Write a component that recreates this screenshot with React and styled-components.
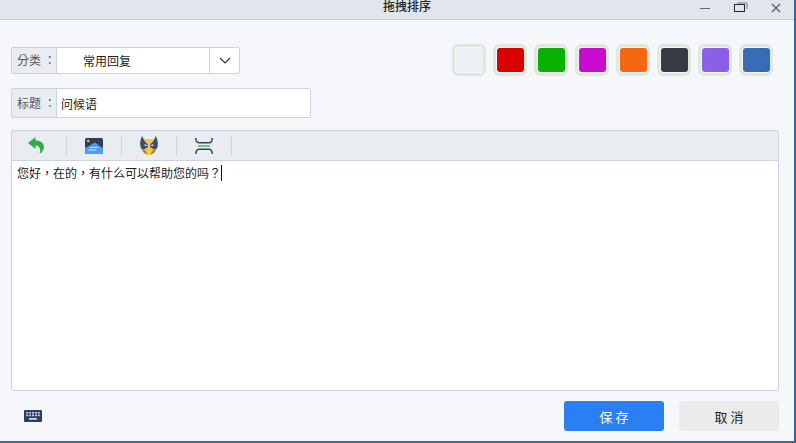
import styled, { createGlobalStyle } from "styled-components";

const Global = createGlobalStyle`
  html, body {
    margin: 0;
    padding: 0;
    background: #f5f7fb;
    overflow: hidden;
  }
  * { box-sizing: border-box; }
`;

const Window = styled.div`
  width: 796px;
  height: 443px;
  display: flex;
  flex-direction: column;
  background: #f5f7fb;
  font-family: "Noto Sans CJK SC", "Liberation Sans", sans-serif;
  font-size: 12px;
  color: #222;
  border-right: 2px solid #2f68a5;
  border-bottom: 2px solid #3f6a85;
  overflow: hidden;
`;

const TitleBar = styled.div`
  height: 20px;
  flex: none;
  background: #e1e6ee;
  border-bottom: 1px solid #c5c9d0;
  position: relative;
`;

const TitleText = styled.div`
  text-align: center;
  font-size: 12px;
  font-weight: 500;
  line-height: 12px;
  padding-left: 20px;
`;

const WinButtons = styled.div`
  position: absolute;
  top: 1px;
  right: 13px;
  display: flex;
  gap: 23px;
  height: 13px;
  align-items: center;
`;

const Body = styled.div`
  flex: 1;
  display: flex;
  flex-direction: column;
  padding: 24px 15px 0 11px;
`;

const TopRow = styled.div`
  display: flex;
  justify-content: space-between;
  align-items: center;
  height: 32px;
  padding-right: 6px;
`;

const Field = styled.div`
  display: flex;
  height: ${(p) => p.$h}px;
  width: ${(p) => p.$w}px;
  border: 1px solid #ccd2de;
  border-radius: 2px;
  background: #fff;
`;

const FieldLabel = styled.div`
  width: 45px;
  flex: none;
  background: #e9edf2;
  border-right: 1px solid #ccd2de;
  color: #555;
  line-height: 1;
  display: flex;
  align-items: center;
  padding-left: 5px;
  white-space: pre;
  font-family: "Noto Sans CJK TC", "Noto Sans CJK SC", sans-serif;
`;

const SelectValue = styled.div`
  flex: 1;
  display: flex;
  align-items: center;
  padding-left: 26px;
`;

const Caret = styled.div`
  width: 30px;
  flex: none;
  border-left: 1px solid #ccd2de;
  display: flex;
  align-items: center;
  justify-content: center;
`;

const TitleValue = styled.div`
  flex: 1;
  display: flex;
  align-items: center;
  padding-left: 4px;
`;

const Swatches = styled.div`
  display: flex;
  gap: 7px;
`;

const Swatch = styled.div`
  width: 34px;
  height: 32px;
  border: 3px solid #dfeadf;
  border-radius: 6px;
  background: #f5f7fb;
  padding: 1px 0.5px;
  display: flex;

  &::after {
    content: "";
    flex: 1;
    border-radius: 3px;
    background: ${(p) => p.$color};
  }
`;

const TitleRow = styled.div`
  margin-top: 12px;
`;

const Editor = styled.div`
  margin-top: 12px;
  height: 261px;
  flex: none;
  border: 1px solid #ccd2de;
  border-radius: 2px;
  display: flex;
  flex-direction: column;
  background: #fff;
`;

const Toolbar = styled.div`
  height: 30px;
  flex: none;
  background: #e9edf2;
  border-bottom: 1px solid #ccd2de;
  display: flex;
  align-items: center;
`;

const Tool = styled.div`
  width: 55px;
  height: 20px;
  display: flex;
  align-items: center;
  justify-content: center;
  border-right: 1px solid #d3d7dd;
  padding-right: ${(p) => p.$shift || 0}px;
`;

const EditArea = styled.div`
  flex: 1;
  padding: 3px 5px;
  font-size: 12px;
  line-height: 18px;
  color: #222;
  font-family: "Noto Sans CJK TC", "Noto Sans CJK SC", sans-serif;
`;

const Cursor = styled.span`
  display: inline-block;
  width: 1px;
  height: 16px;
  background: #111;
  vertical-align: -3px;
`;

const Footer = styled.div`
  flex: 1;
  display: flex;
  align-items: flex-start;
  justify-content: space-between;
  padding: 10px 0 0 13px;
`;

const KeyboardWrap = styled.div`
  margin-top: 9px;
  display: flex;
`;

const Buttons = styled.div`
  display: flex;
  gap: 15px;
`;

const Button = styled.div`
  width: 100px;
  height: 30px;
  border-radius: 3px;
  display: flex;
  align-items: center;
  justify-content: center;
  font-size: 13px;
  letter-spacing: 3px;
  padding-left: 3px;
  background: ${(p) => (p.$primary ? "#2a7ff3" : "#ebebeb")};
  color: ${(p) => (p.$primary ? "#fff" : "#222")};
`;

function UndoIcon() {
  return (
    <svg width="16" height="17" viewBox="0 0 16 17">
      <path d="M0 6 L7.5 0 V3.4 C12.5 3.4 16 6 16 10 C16 13 14 15.5 11.5 17 C13 13.5 12.5 8.6 7.5 8.4 V12 Z" fill="#35ab48" />
    </svg>
  );
}

function ImageIcon() {
  return (
    <svg width="18" height="16" viewBox="0 0 18 16">
      <rect width="18" height="16" rx="1.5" fill="#333e55" />
      <circle cx="3.2" cy="3" r="1.2" fill="#f0d040" />
      <path d="M0 10 L5 7.5 L10 4.5 L14 7.5 L18 10 V14.5 A1.5 1.5 0 0 1 16.5 16 H1.5 A1.5 1.5 0 0 1 0 14.5 Z" fill="#4f9df2" />
      <rect x="5" y="9" width="8" height="1" fill="#cfe6ff" />
      <rect x="3.5" y="11.5" width="8" height="1" fill="#dcecff" />
    </svg>
  );
}

function MaskIcon() {
  return (
    <svg width="18" height="19" viewBox="0 0 18 19">
      <path d="M2 3 H16 V13 C16 16.5 12.5 19 9 19 C5.5 19 2 16.5 2 13 Z" fill="#f5c84f" />
      <path d="M2.5 0 C0 3 -0.5 9 1 12.5 L4 13.5 L8 11 L7.5 8 L5 5.5 C3.8 4 2.8 2.2 2.5 0 Z" fill="#3d4d70" />
      <path d="M15.5 0 C18 3 18.5 9 17 12.5 L14 13.5 L10 11 L10.5 8 L13 5.5 C14.2 4 15.2 2.2 15.5 0 Z" fill="#3d4d70" />
      <path d="M4.5 8 L7.5 9.8 L5 10 Z M13.5 8 L10.5 9.8 L13 10 Z" fill="#fff" />
      <path d="M1.5 12.8 L4.5 13.8 L6 15 C6.5 16.5 7 17.8 8 18.8 C5 18.4 2.6 16 1.5 12.8 Z" fill="#b9823f" />
      <path d="M16.5 12.8 L13.5 13.8 L12 15 C11.5 16.5 11 17.8 10 18.8 C13 18.4 15.4 16 16.5 12.8 Z" fill="#b9823f" />
    </svg>
  );
}

function SplitIcon() {
  return (
    <svg width="18" height="16" viewBox="0 0 18 16" fill="none">
      <path d="M0.8 0 C0.8 2.8 1.8 4.8 4 4.8 H14 C16.2 4.8 17.2 2.8 17.2 0" stroke="#3d4450" strokeWidth="1.5" />
      <path d="M3 8 H15" stroke="#3fc05a" strokeWidth="1.5" />
      <path d="M0.8 16 C0.8 13.2 1.8 11.2 4 11.2 H14 C16.2 11.2 17.2 13.2 17.2 16" stroke="#3d4450" strokeWidth="1.5" />
    </svg>
  );
}

function KeyboardIcon() {
  return (
    <svg width="18" height="12" viewBox="0 0 18 12">
      <rect width="18" height="12" rx="1" fill="#2c3e63" />
      <g fill="#c9d2e4">
        {[0, 1, 2, 3, 4].map((i) => (
          <rect key={"a" + i} x={2.2 + i * 2.9} y="2" width="2" height="1.6" />
        ))}
        {[0, 1, 2, 3, 4].map((i) => (
          <rect key={"b" + i} x={2.2 + i * 2.9} y="4.6" width="2" height="1.6" />
        ))}
        <rect x="5" y="8" width="8" height="1.8" />
      </g>
    </svg>
  );
}

const colors = ["#edf1f4", "#d90000", "#08b000", "#c90ccf", "#f56713", "#363b44", "#8b5fe6", "#366db5"];

export default function App() {
  return (
    <Window>
      <Global />
      <TitleBar>
        <TitleText>拖拽排序</TitleText>
        <WinButtons>
          <svg width="12" height="12" viewBox="0 0 12 12"><path d="M1 6.5 H11" stroke="#666" strokeWidth="1" /></svg>
          <svg width="14" height="12" viewBox="0 0 14 12" fill="none">
            <rect x="0.5" y="2.5" width="10" height="7" stroke="#222" />
            <path d="M3 1 H13 V7" stroke="#777" />
          </svg>
          <svg width="10" height="10" viewBox="0 0 10 10"><path d="M1 1 L9 9 M9 1 L1 9" stroke="#555" strokeWidth="1.1" /></svg>
        </WinButtons>
      </TitleBar>
      <Body>
        <TopRow>
          <Field $w={229} $h={27}>
            <FieldLabel>分类 ：</FieldLabel>
            <SelectValue>常用回复</SelectValue>
            <Caret>
              <svg width="12" height="7" viewBox="0 0 12 7" fill="none"><path d="M1 1 L6 6 L11 1" stroke="#333" strokeWidth="1.2" /></svg>
            </Caret>
          </Field>
          <Swatches>
            {colors.map((c) => <Swatch key={c} $color={c} />)}
          </Swatches>
        </TopRow>
        <TitleRow>
          <Field $w={300} $h={30}>
            <FieldLabel>标题 ：</FieldLabel>
            <TitleValue>问候语</TitleValue>
          </Field>
        </TitleRow>
        <Editor>
          <Toolbar>
            <Tool $shift={7}><UndoIcon /></Tool>
            <Tool><ImageIcon /></Tool>
            <Tool><MaskIcon /></Tool>
            <Tool><SplitIcon /></Tool>
          </Toolbar>
          <EditArea>您好，在的，有什么可以帮助您的吗？<Cursor /></EditArea>
        </Editor>
        <Footer>
          <KeyboardWrap><KeyboardIcon /></KeyboardWrap>
          <Buttons>
            <Button $primary>保存</Button>
            <Button>取消</Button>
          </Buttons>
        </Footer>
      </Body>
    </Window>
  );
}
